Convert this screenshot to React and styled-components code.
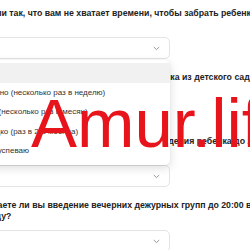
import React from 'react';
import styled, { createGlobalStyle } from 'styled-components';

const GlobalStyle = createGlobalStyle`
  html, body {
    margin: 0;
    padding: 0;
    background: #ffffff;
    overflow: hidden;
  }
  body {
    font-family: "Liberation Sans", Arial, sans-serif;
    color: #222222;
  }
`;

const Page = styled.div`
  position: relative;
  width: 250px;
  height: 250px;
  overflow: hidden;
`;

const Form = styled.div`
  display: flex;
  flex-direction: column;
  gap: 13px;
  width: 330px;
  margin-left: -52px;
  padding-top: 8px;
`;

const Question = styled.div`
  display: flex;
  flex-direction: column;
`;

const Title = styled.div`
  font-size: 8.75px;
  font-weight: 700;
  line-height: 11px;
  color: #222222;
  margin-bottom: ${(p) => (p.$tight ? '8px' : '18px')};
`;

const Field = styled.div`
  position: relative;
  width: 222px;
`;

const Select = styled.div`
  box-sizing: border-box;
  height: 22px;
  border: 1px solid #e4e4e4;
  border-radius: 5px;
  background: #ffffff;
  display: flex;
  align-items: center;
  justify-content: flex-end;
  padding-right: 9px;
`;

const Menu = styled.div`
  position: absolute;
  top: calc(100% + 1px);
  left: 0;
  right: 0;
  z-index: 2;
  background: #ffffff;
  border-radius: 5px;
  box-shadow: 0 3px 10px rgba(0, 0, 0, 0.14), 0 0 2px rgba(0, 0, 0, 0.06);
  padding: 3px 0 4px;
`;

const Option = styled.div`
  height: 19.5px;
  line-height: 19.5px;
  padding: 0 22px;
  font-size: 8px;
  color: #333333;
  white-space: nowrap;
  background: ${(p) => (p.$active ? '#f1f1f1' : 'transparent')};
`;

const Watermark = styled.div`
  position: absolute;
  left: 31px;
  top: 84px;
  z-index: 5;
  font-family: "Liberation Sans", Arial, sans-serif;
  font-size: 69px;
  line-height: 80px;
  color: #e8141c;
  white-space: nowrap;
  pointer-events: none;
`;

const Chevron = () => (
  <svg width="7" height="5" viewBox="0 0 7 5" fill="none">
    <path d="M0.8 1 L3.5 3.6 L6.2 1" stroke="#8a8a8a" strokeWidth="0.9" />
  </svg>
);

const options = [
  '',
  'Регулярно (несколько раз в неделю)',
  'Иногда (несколько раз в месяц)',
  'Уже редко (раз в 2-3 месяца)',
  'Всегда успеваю',
];

const questions = [
  {
    title: 'Случается ли так, что вам не хватает времени, чтобы забрать ребенка',
    open: true,
  },
  { title: 'Как часто у вас возникает проблема забрать ребенка из детского сада?' },
  {
    title: 'Рассматриваете ли вы сейчас возможность нахождения ребенка до 20:00?',
  },
  {
    title:
      'Поддерживаете ли вы введение вечерних дежурных групп до 20:00 в детском саду?',
    tight: true,
  },
];

export default function App() {
  return (
    <Page>
      <GlobalStyle />
      <Form>
        {questions.map((q, i) => (
          <Question key={i}>
            <Title $tight={q.tight}>{q.title}</Title>
            <Field>
              <Select>
                <Chevron />
              </Select>
              {q.open && (
                <Menu>
                  {options.map((o, j) => (
                    <Option key={j} $active={j === 0}>
                      {o}
                    </Option>
                  ))}
                </Menu>
              )}
            </Field>
          </Question>
        ))}
      </Form>
      <Watermark>Amur.life</Watermark>
    </Page>
  );
}
